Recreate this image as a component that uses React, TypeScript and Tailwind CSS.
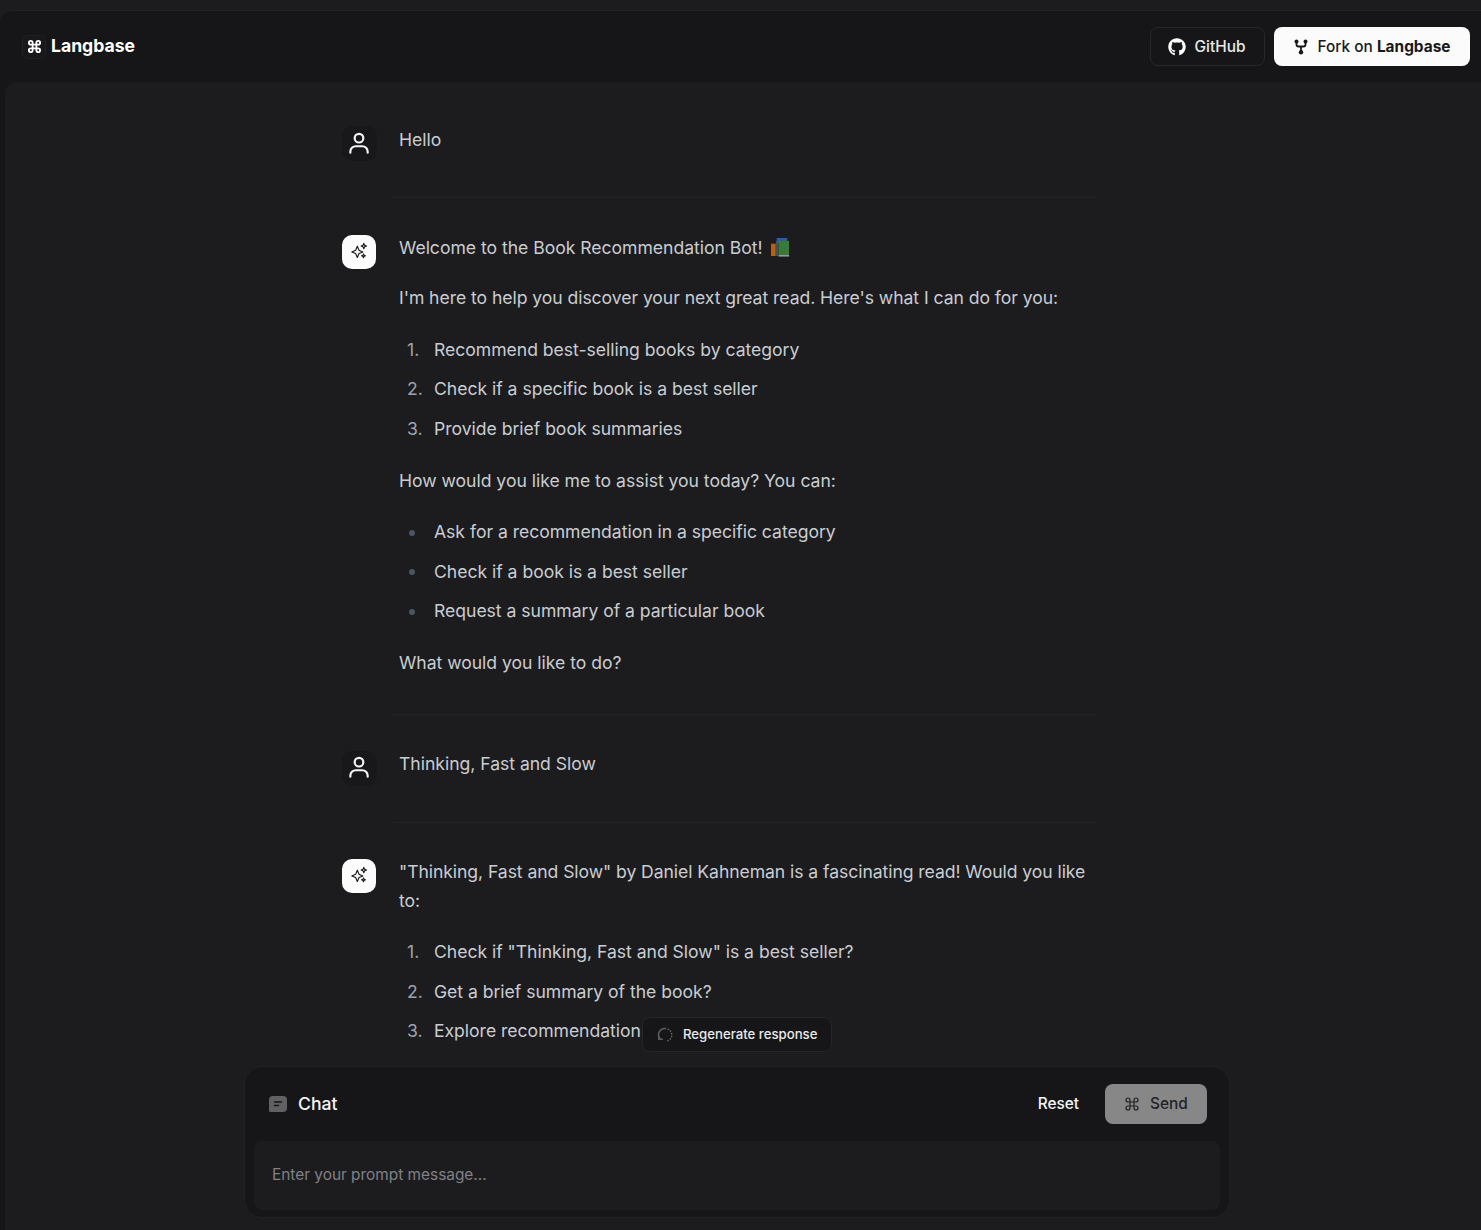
import { Command } from 'lucide-react';
import { FaGithub } from 'react-icons/fa';

function UserIcon() {
  return (
    <svg viewBox="0 0 24 24" className="h-[26px] w-[26px]" fill="none" stroke="#f5f5f5" strokeWidth="2" strokeLinecap="round">
      <circle cx="12" cy="7.500" r="4" />
      <path d="M4 21v-1a5 5 0 0 1 5-5h6a5 5 0 0 1 5 5v1" />
    </svg>
  );
}

function SparkIcon() {
  return (
    <svg viewBox="0 0 16 16" className="h-[18px] w-[18px]" fill="none" stroke="#18181b" strokeWidth="1" strokeLinejoin="round">
      <path d="M6.500 3.800 8 7.400l3.400 1.400L8 10.200l-1.500 3.600-1.500-3.600-3.400-1.400L5 7.400z" />
      <path d="M12.300 1.200l.7 1.700 1.700.7-1.700.7-.7 1.700-.7-1.700-1.700-.7 1.700-.7z" />
      <path d="M12 10.600l.5 1.200 1.200.5-1.200.5-.5 1.200-.5-1.200-1.200-.5 1.200-.5z" />
    </svg>
  );
}

function BooksIcon() {
  return (
    <svg viewBox="0 0 20 20" className="ml-2 inline-block h-[19px] w-[19px] align-[-3px] opacity-85">
      <rect x="0" y="6" width="5" height="13" fill="#d66a12" />
      <rect x="5" y="3" width="3" height="16" fill="#55565a" />
      <rect x="6" y="0" width="11" height="6" fill="#2f66c8" />
      <rect x="8" y="3" width="11" height="15" fill="#3d8b40" />
      <rect x="8" y="18" width="11" height="1.500" fill="#b9c4b9" />
    </svg>
  );
}

function ForkIcon() {
  return (
    <svg viewBox="0 0 14 16" className="h-4 w-[14px]" fill="none" stroke="#18181b" strokeWidth="1.800">
      <circle cx="2.500" cy="2.500" r="2" fill="#18181b" stroke="none" />
      <circle cx="11.500" cy="2.500" r="2" fill="#18181b" stroke="none" />
      <circle cx="7" cy="13.300" r="2.200" fill="#18181b" stroke="none" />
      <path d="M2.500 4v1.500a2 2 0 0 0 2 2h5a2 2 0 0 0 2-2V4M7 7.500V12" />
    </svg>
  );
}

function ChatIcon() {
  return (
    <svg viewBox="0 0 18 16" className="h-4 w-[18px]">
      <path d="M4 0h10a4 4 0 0 1 4 4v8a4 4 0 0 1-4 4H1.500A1.500 1.500 0 0 1 0 14.500V4a4 4 0 0 1 4-4z" fill="#616164" />
      <path d="M5.500 6h7M5.500 9.500h4" stroke="#161618" strokeWidth="1.500" strokeLinecap="round" />
    </svg>
  );
}

function RegenIcon() {
  return (
    <svg viewBox="0 0 16 16" className="h-4 w-4" fill="none" stroke="#5c5c61" strokeWidth="1.500" strokeLinecap="round" strokeLinejoin="round">
      <path d="M2.800 11.500A6.200 6.200 0 0 1 8.500 1.600" />
      <path d="M11 2.300A6.200 6.200 0 0 1 9 14.200" strokeDasharray="0.500 2.300" />
      <path d="M1.800 8.800v3.500h3.500" />
    </svg>
  );
}

function Avatar({ bot }: { bot?: boolean }) {
  return (
    <div className="flex h-[35px] w-[35px] shrink-0 items-center">
      {bot ? (
        <div className="flex h-[34px] w-[34px] items-center justify-center rounded-[10px] bg-[#fbfbfb] pb-[2px]">
          <SparkIcon />
        </div>
      ) : (
        <div className="flex h-[35px] w-[35px] items-center justify-center rounded-[10px] bg-[#18181a] pb-[2px] pr-[2px]">
          <UserIcon />
        </div>
      )}
    </div>
  );
}

function Para({ children }: { children: React.ReactNode }) {
  return <p className="mb-[21px] last:mb-0">{children}</p>;
}

function NumList({ items }: { items: string[] }) {
  return (
    <ol className="mb-[23.2px] mt-[23px] flex flex-col gap-[10.7px] last:mb-0">
      {items.map((item, i) => (
        <li key={item} className="flex">
          <span className="w-[35px] pl-2 text-[#9ca3af]">{i + 1}.</span>
          <span>{item}</span>
        </li>
      ))}
    </ol>
  );
}

function BulletList({ items }: { items: string[] }) {
  return (
    <ul className="my-[23px] flex flex-col gap-[10.7px]">
      {items.map(item => (
        <li key={item} className="flex items-center">
          <span className="ml-[10px] mr-[19px] h-[6px] w-[6px] rounded-full bg-[#4b5563]" />
          <span>{item}</span>
        </li>
      ))}
    </ul>
  );
}

function Row({ bot, last, shift, children }: { bot?: boolean; last?: boolean; shift?: string; children: React.ReactNode }) {
  return (
    <div>
      <div className="flex gap-[22px] py-9">
        <Avatar bot={bot} />
        <div className={`min-w-0 flex-1 ${shift ?? ''}`}>{children}</div>
      </div>
      {!last && <div className="ml-[51px] h-px bg-[#242426]" />}
    </div>
  );
}

export default function App() {
  return (
    <div className="relative h-screen overflow-hidden bg-[#1c1c1e] pt-[10px] font-['Inter',sans-serif]">
      <div className="h-full rounded-tl-xl border-t border-[#232325] bg-[#161618]">
        {/* Header */}
        <header className="flex h-[71px] items-center justify-between pl-[22px] pr-[11px]">
          <div className="flex items-center gap-[5px]">
            <div className="flex h-[24px] w-[24px] items-center justify-center rounded-md border border-[#212123] bg-[#18181a]">
              <Command className="h-[15px] w-[15px] text-white" strokeWidth={3} />
            </div>
            <span className="mb-[2px] text-[17.6px] font-bold leading-none text-white">Langbase</span>
          </div>
          <div className="flex items-center gap-[9px]">
            <button className="flex h-[39px] w-[115px] items-center justify-center gap-[9px] rounded-lg border border-[#28282b] pr-[2px] text-[15.4px] font-medium text-[#e9e9ea]">
              <FaGithub className="h-[18px] w-[18px] text-white" />
              GitHub
            </button>
            <button className="flex h-[39px] w-[196px] items-center justify-center gap-[10px] rounded-lg bg-[#fbfbfb] text-[15.4px] font-medium text-[#18181b]">
              <ForkIcon />
              <span>
                Fork on <span className="font-bold">Langbase</span>
              </span>
            </button>
          </div>
        </header>

        {/* Messages */}
        <main className="ml-[5px] h-full rounded-tl-xl bg-[#1c1c1e] pt-2 pl-[337px] text-[17.6px] leading-[28.8px] tracking-[-0.03px] text-[#c9cdd3]">
          <div className="w-[754px]">
            <Row>
              <Para>Hello</Para>
            </Row>
            <Row bot>
              <Para>
                Welcome to the Book Recommendation Bot!
                <BooksIcon />
              </Para>
              <Para>
                <span className="tracking-[-0.06px]">I&apos;m here to help you discover your next great read. Here&apos;s what I can do for you:</span>
              </Para>
              <NumList items={['Recommend best-selling books by category', 'Check if a specific book is a best seller', 'Provide brief book summaries']} />
              <Para>How would you like me to assist you today? You can:</Para>
              <BulletList items={['Ask for a recommendation in a specific category', 'Check if a book is a best seller', 'Request a summary of a particular book']} />
              <Para>What would you like to do?</Para>
            </Row>
            <Row shift="-mt-[0.6px]">
              <Para>Thinking, Fast and Slow</Para>
            </Row>
            <Row bot last shift="-mt-[1.2px]">
              <Para>
                <span className="tracking-[-0.07px]">&quot;Thinking, Fast and Slow&quot; by Daniel Kahneman is a fascinating read! Would you like to:</span>
              </Para>
              <NumList items={['Check if "Thinking, Fast and Slow" is a best seller?', 'Get a brief summary of the book?', 'Explore recommendations']} />
            </Row>
          </div>
        </main>
      </div>

      {/* Regenerate + chat box float over the messages */}
      <button className="absolute left-[642px] top-[1017px] flex h-[35px] w-[190px] items-center gap-[10px] rounded-lg border border-[#26262a] bg-[#161618] pl-[14px] text-[13.2px] font-medium text-[#e9e9ea]">
        <RegenIcon />
        Regenerate response
      </button>
      <div className="absolute left-[244px] top-[1066px] h-[152px] w-[986px] rounded-[18px] border border-[#212123] bg-[#161618] pl-[9px] pr-[9px]">
        <div className="flex h-[74px] items-center justify-between pl-[15px] pr-[13px]">
          <div className="flex items-center gap-[11px] text-[17.6px] font-medium leading-none text-[#f4f4f5]">
            <ChatIcon />
            Chat
          </div>
          <div className="flex items-center gap-[26px]">
            <span className="text-[15.4px] font-medium text-[#f4f4f5]">Reset</span>
            <button className="flex h-10 w-[102px] items-center justify-center gap-[10px] rounded-lg bg-[#878787] text-[15.4px] font-medium text-[#222224]">
              <Command className="h-4 w-4" strokeWidth={1.8} />
              Send
            </button>
          </div>
        </div>
        <textarea
          placeholder="Enter your prompt message..."
          className="block h-[69px] w-full resize-none rounded-lg bg-[#1c1c1e] px-[18px] py-[22px] text-[15.4px] leading-6 text-white outline-none placeholder:text-[#808087]"
        />
      </div>
    </div>
  );
}
